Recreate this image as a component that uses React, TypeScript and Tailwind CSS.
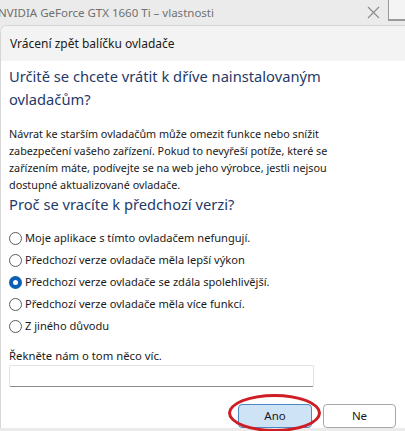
const reasons = [
  "Moje aplikace s tímto ovladačem nefungují.",
  "Předchozí verze ovladače měla lepší výkon",
  "Předchozí verze ovladače se zdála spolehlivější.",
  "Předchozí verze ovladače měla více funkcí.",
  "Z jiného důvodu",
];

function Radio({ checked }: { checked?: boolean }) {
  if (checked) {
    return (
      <span className="flex h-[13px] w-[13px] shrink-0 items-center justify-center rounded-full bg-[#0a5fb4]">
        <span className="h-[5px] w-[5px] rounded-full bg-white" />
      </span>
    );
  }
  return <span className="h-[13px] w-[13px] shrink-0 rounded-full border border-[#5c5c5c] bg-white" />;
}

export default function App() {
  return (
    <div
      className="relative h-[431px] w-[405px] overflow-hidden bg-[#ebebeb] text-[#1a1a1a]"
      style={{ fontFamily: '"Noto Sans", "Open Sans", sans-serif' }}
    >
      {/* window title bar behind the dialog */}
      <div className="flex h-[25px] items-center">
        <span className="-ml-[2px] whitespace-nowrap text-[11.5px] text-[#707070]">
          NVIDIA GeForce GTX 1660 Ti – vlastnosti
        </span>
        <svg className="ml-auto mr-[25px]" width="13" height="13" viewBox="0 0 13 13">
          <path d="M1 1 L12 12 M12 1 L1 12" stroke="#8a8a8a" strokeWidth="1.1" />
        </svg>
      </div>
      <div className="absolute left-[388px] top-0 h-[21px] w-[17px] border-b-2 border-l border-[#9a9a9a] bg-[#f4f4f4]" />

      {/* dialog */}
      <div className="relative -mr-4 rounded-tl-[7px] border-l border-t border-[#d6d6d6] bg-white">
        <div className="flex h-[35px] items-center rounded-tl-[7px] bg-[#f3f3f3] pl-[9px] text-[12px] text-[#1a1a1a]">
          Vrácení zpět balíčku ovladače
        </div>

        <div className="px-[8px] pt-[4px]">
          <h1 className="text-[14.7px] leading-[23px] text-[#1f3a68]">
            Určitě se chcete vrátit k dříve nainstalovaným
            <br />
            ovladačům?
          </h1>

          <p className="mt-[14px] whitespace-nowrap text-[10.8px] leading-[17px]">
            Návrat ke starším ovladačům může omezit funkce nebo snížit
            <br />
            zabezpečení vašeho zařízení. Pokud to nevyřeší potíže, které se
            <br />
            zařízením máte, podívejte se na web jeho výrobce, jestli nejsou
            <br />
            dostupné aktualizované ovladače.
          </p>

          <h2 className="mt-0 text-[14.7px] leading-[22px] text-[#1f3a68]">Proč se vracíte k předchozí verzi?</h2>

          <div className="mt-[12px] flex flex-col">
            {reasons.map((r, i) => (
              <div key={r} className="flex h-[22px] items-center gap-[3px] text-[11.1px]">
                <Radio checked={i === 2} />
                <span className="whitespace-nowrap">{r}</span>
              </div>
            ))}
          </div>

          <div className="mt-[10px] text-[11.3px] leading-[17px]">Řekněte nám o tom něco víc.</div>
          <div className="mt-[1px] h-[22px] w-[305px] rounded-[2px] border border-[#e3e3e3] border-b-[#8c8c8c] bg-white" />

          <div className="mt-[17px] flex gap-[11px] pl-[229px]">
            <button className="h-[24px] w-[74px] rounded-[4px] border border-[#4d87c2] bg-[#cfe3f6] text-[11.5px] text-[#1a1a1a]">
              Ano
            </button>
            <button className="h-[24px] w-[73px] rounded-[4px] border border-[#a8a8a8] bg-white text-[11.5px] text-[#1a1a1a]">
              Ne
            </button>
          </div>
        </div>
      </div>

      {/* red highlight ellipse */}
      <div className="absolute left-[228px] top-[394px] h-[38px] w-[93px] rounded-[50%] border-[3px] border-[#d01c24]" />
    </div>
  );
}
